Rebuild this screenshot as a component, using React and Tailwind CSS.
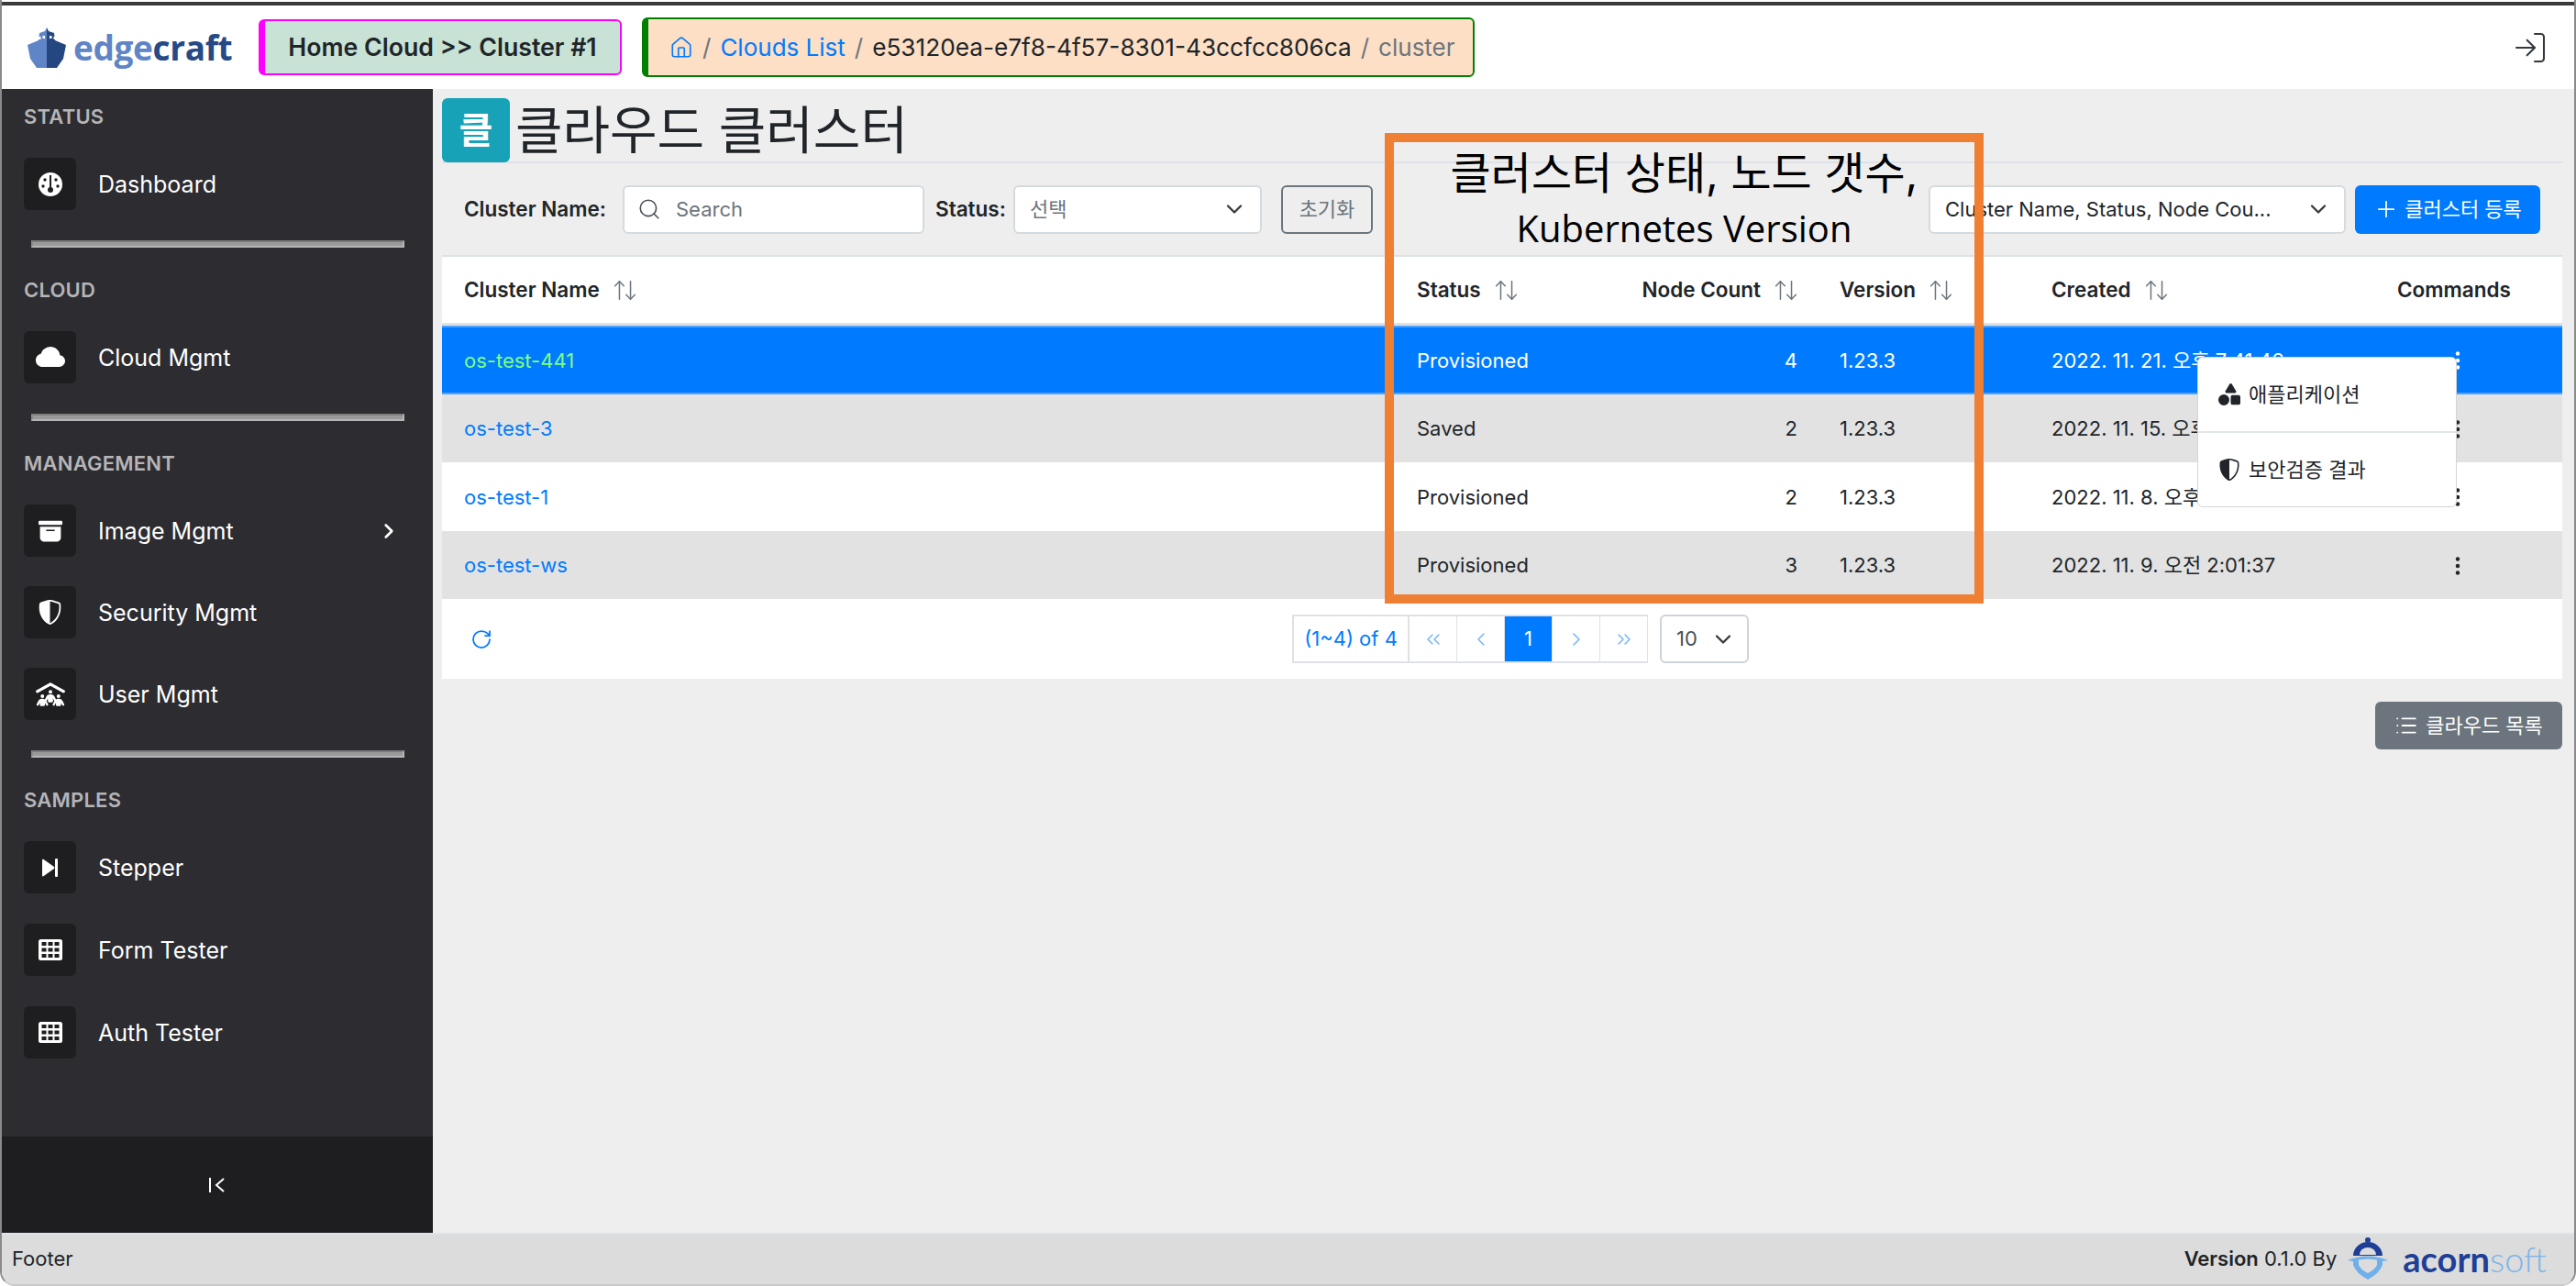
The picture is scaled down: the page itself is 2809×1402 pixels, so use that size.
import React from 'react';
import { ArrowUpDown, ChevronDown, ChevronLeft, ChevronRight, ChevronsLeft, ChevronsRight, LogIn, Plus, RotateCw, Search, List, House } from 'lucide-react';
import { BsArchiveFill, BsCloudFill, BsShieldShaded, BsThreeDotsVertical } from 'react-icons/bs';
import { FaPeopleRoof, FaShapes } from 'react-icons/fa6';

const GRID = 'grid grid-cols-[1039px_246px_215px_231px_377px_202px] items-center';

const clusters = [
  { name: 'os-test-441', status: 'Provisioned', nodes: 4, created: '2022. 11. 21. 오후 7:41:46', selected: true },
  { name: 'os-test-3', status: 'Saved', nodes: 2, created: '2022. 11. 15. 오후 4:12:09', striped: true },
  { name: 'os-test-1', status: 'Provisioned', nodes: 2, created: '2022. 11. 8. 오후 3:20:51' },
  { name: 'os-test-ws', status: 'Provisioned', nodes: 3, created: '2022. 11. 9. 오전 2:01:37', striped: true },
];

const GaugeIcon = () => (
  <svg viewBox="0 0 26 26" className="h-[26px] w-[26px]">
    <circle cx="13" cy="13" r="13" fill="#fff" />
    <circle cx="7" cy="8" r="1.7" fill="#1e1e20" />
    <circle cx="19" cy="8" r="1.7" fill="#1e1e20" />
    <circle cx="5" cy="15" r="1.7" fill="#1e1e20" />
    <circle cx="21" cy="15" r="1.7" fill="#1e1e20" />
    <path d="M13 3v14" stroke="#1e1e20" strokeWidth="2" />
    <circle cx="13" cy="19" r="3" fill="#1e1e20" />
  </svg>
);

const StepIcon = () => (
  <svg viewBox="0 0 17 20" className="h-5 w-[17px]" fill="#fff">
    <path d="M1 0.5q-1 0-1 1.500v16q0 1.500 1 1.500l12-8.500q1-1 0-2z" />
    <rect x="14" y="0" width="3" height="20" rx="1" />
  </svg>
);

const GridIcon = () => (
  <svg viewBox="0 0 26 23" className="h-[23px] w-[26px]">
    <rect width="26" height="23" rx="2.500" fill="#fff" />
    {[3, 9.5, 16].map((y) =>
      [3.5, 10.5, 17.5].map((x) => <rect key={`${x}-${y}`} x={x} y={y} width="5" height="4" fill="#1e1e20" />)
    )}
  </svg>
);

const CollapseIcon = () => (
  <svg viewBox="0 0 20 20" className="h-5 w-5" fill="none" stroke="#fff" strokeWidth="2">
    <path d="M2 2v16M17 3l-8 7 8 7" />
  </svg>
);

const ShipLogo = () => (
  <svg viewBox="0 0 42 44" className="h-[44px] w-[42px]">
    <path d="M21 0l2 4 6 2 1 8 12 5-3 15-7 10h-11z" fill="#24477f" />
    <path d="M21 0l-2 4-6 2-1 8-12 5 3 15 7 10h11z" fill="#5f85c7" />
    <rect x="11.5" y="10" width="3" height="3" fill="#fff" />
    <rect x="16.5" y="9" width="2.5" height="3" fill="#fff" />
    <rect x="24" y="9" width="2.5" height="3" fill="#fff" />
    <rect x="28.5" y="10" width="2.5" height="3" fill="#fff" />
  </svg>
);

const AcornLogo = () => (
  <svg viewBox="0 0 44 46" className="h-[46px] w-[44px]">
    <circle cx="22" cy="3" r="3" fill="#1f3f96" />
    <path d="M6 20a16 15 0 0 1 32 0z" fill="#1f3f96" />
    <path d="M13 19a9 8 0 0 1 18 0z" fill="#dcdcdc" />
    <path d="M0 25q22-9 44 0l-6 1q-16-5-32 0z" fill="#6fb0ea" />
    <path d="M6 24v6q3 9 16 16 13-7 16-16v-6l-6 1v5q-2 5-10 9-8-4-10-9v-5z" fill="#6fb0ea" />
  </svg>
);

const SortLabel = ({ children, className = '' }) => (
  <div className={`flex items-center gap-[13px] whitespace-nowrap pl-6 font-semibold ${className}`}>
    {children}
    <ArrowUpDown size={29} strokeWidth={1.25} className="shrink-0 text-[#6c757d]" />
  </div>
);

const SideItem = ({ icon, label, chevron }) => (
  <div className="flex h-[57px] items-center gap-6 pr-[11px] text-[25px] text-white">
    <span className="flex h-[57px] w-[57px] shrink-0 items-center justify-center rounded-md bg-[#1e1e20]">{icon}</span>
    <span className="flex-1 pt-[2px]">{label}</span>
    {chevron && <ChevronRight size={26} strokeWidth={2.5} />}
  </div>
);

const SideGroup = ({ title, gap, rule, children }) => (
  <div>
    <div className="mb-[30px] h-[30px] text-[22px] font-semibold leading-[30px] tracking-[0.01em] text-[#b5b5b8]">{title}</div>
    <div className={`flex flex-col ${gap}`}>{children}</div>
    {rule && (
      <div className="mb-[31px] ml-2 mr-[7px] mt-[33px] h-2 border-2 border-t-[#7d7d7d] border-l-[#8c8c8c] border-r-[#b5b5b5] border-b-[#b5b5b5] bg-[#9a9a9a]" />
    )}
  </div>
);

const Sidebar = () => (
  <aside className="flex w-[470px] shrink-0 flex-col bg-[#2c2c31]">
    <nav className="flex-1 pl-[24px] pr-[24px] pt-[15px]">
      <SideGroup title="STATUS" gap="gap-8" rule>
        <SideItem icon={<GaugeIcon />} label="Dashboard" />
      </SideGroup>
      <SideGroup title="CLOUD" gap="gap-8" rule>
        <SideItem icon={<BsCloudFill size={32} color="#fff" />} label="Cloud Mgmt" />
      </SideGroup>
      <SideGroup title="MANAGEMENT" gap="gap-8" rule>
        <SideItem icon={<BsArchiveFill size={26} color="#fff" />} label="Image Mgmt" chevron />
        <SideItem icon={<BsShieldShaded size={27} color="#fff" />} label="Security Mgmt" />
        <SideItem icon={<FaPeopleRoof size={32} color="#fff" />} label="User Mgmt" />
      </SideGroup>
      <SideGroup title="SAMPLES" gap="gap-[33px]">
        <SideItem icon={<StepIcon />} label="Stepper" />
        <SideItem icon={<GridIcon />} label="Form Tester" />
        <SideItem icon={<GridIcon />} label="Auth Tester" />
      </SideGroup>
    </nav>
    <div className="flex h-[105px] items-center justify-center bg-[#1e1e20]">
      <CollapseIcon />
    </div>
  </aside>
);

const Toolbar = () => (
  <div className="flex h-[100px] items-center text-[22px] text-[#212529]">
    <span className="ml-6 w-[173px] text-[22.5px] font-semibold">Cluster Name:</span>
    <div className="flex h-[53px] w-[329px] items-center gap-[16px] rounded-md border-2 border-[#d5dadf] bg-white pl-[14px]">
      <Search size={26} strokeWidth={1.5} className="text-[#495057]" />
      <span className="text-[#6c757d]">Search</span>
    </div>
    <span className="ml-3 w-[85px] text-[22.5px] font-semibold">Status:</span>
    <div className="flex h-[53px] w-[271px] items-center justify-between rounded-md border-2 border-[#d5dadf] bg-white pl-[16px] pr-[14px] text-[#6c757d]">
      선택
      <ChevronDown size={28} strokeWidth={2} className="text-[#343a40]" />
    </div>
    <button className="ml-[21px] h-[53px] w-[100px] rounded-md border-2 border-[#6c757d] text-[#6c757d]">초기화</button>
    <div className="ml-[606px] flex h-[53px] w-[455px] items-center justify-between rounded-md border-2 border-[#d5dadf] bg-white pl-[16px] pr-[14px]">
      Cluster Name, Status, Node Cou...
      <ChevronDown size={28} strokeWidth={2} className="text-[#343a40]" />
    </div>
    <button className="ml-[10px] flex h-[53px] w-[202px] items-center justify-center gap-[6px] rounded-md bg-[#007bff] text-white">
      <Plus size={28} strokeWidth={1.5} />
      클러스터 등록
    </button>
  </div>
);

const ClusterRow = ({ row }) => {
  let tone = 'bg-white text-[#212529]';
  if (row.striped) tone = 'bg-[#e2e2e2] text-[#212529]';
  if (row.selected) tone = 'bg-[#007bff] text-white border-y-2 border-[#4da3ff]';
  return (
    <div className={`${GRID} h-[74.5px] pt-[2px] ${tone}`}>
      <div className={`pl-6 ${row.selected ? 'text-[#7dff7d]' : 'text-[#007bff]'}`}>{row.name}</div>
      <div className="pl-6">{row.status}</div>
      <div className="pr-[22px] text-right">{row.nodes}</div>
      <div className="pl-6">1.23.3</div>
      <div className="pl-6">{row.created}</div>
      <div className="flex pl-[78px]">
        <BsThreeDotsVertical size={24} />
      </div>
    </div>
  );
};

const PageCell = ({ children, active }) => (
  <span
    className={`-ml-px flex h-[53px] w-[53px] items-center justify-center border-y-2 border-x border-[#dee2e6] ${
      active ? 'border-[#007bff] bg-[#007bff] text-white' : 'bg-white text-[#76b4fa]'
    }`}
  >
    {children}
  </span>
);

const Paginator = () => (
  <div className="relative flex h-[87px] items-center justify-center bg-white text-[22px]">
    <RotateCw size={24} strokeWidth={1.75} className="absolute left-[31px] top-[32px] text-[#007bff]" />
    <div className="ml-[40px] flex items-center">
      <span className="flex h-[53px] w-[128px] items-center justify-center border-2 border-[#dee2e6] text-[#007bff]">(1~4) of 4</span>
      <PageCell><ChevronsLeft size={24} strokeWidth={1.5} /></PageCell>
      <PageCell><ChevronLeft size={24} strokeWidth={1.5} /></PageCell>
      <PageCell active>1</PageCell>
      <PageCell><ChevronRight size={24} strokeWidth={1.5} /></PageCell>
      <PageCell><ChevronsRight size={24} strokeWidth={1.5} /></PageCell>
      <div className="ml-[13px] flex h-[53px] w-[97px] items-center justify-between rounded-md border-2 border-[#ced4da] pl-[16px] pr-[12px] text-[#495057]">
        10
        <ChevronDown size={28} strokeWidth={2} className="text-[#343a40]" />
      </div>
    </div>
  </div>
);

const RowMenu = () => (
  <div className="absolute left-[1924px] top-[292px] flex h-[164px] w-[283px] flex-col rounded-md border border-[#d5d5d5] bg-white text-[22px] text-[#212529]">
    <div className="flex h-[82px] items-center gap-[9px] border-b-2 border-[#e3e6e9] pl-[22px]">
      <FaShapes size={24} />
      애플리케이션
    </div>
    <div className="flex flex-1 items-center gap-[9px] pl-[22px]">
      <BsShieldShaded size={24} />
      보안검증 결과
    </div>
  </div>
);

const Callout = () => (
  <div className="absolute left-[1038px] top-[48px] flex h-[513px] w-[653px] flex-col items-center border-[10px] border-[#ee7f33] pt-[4px] text-black">
    <div className="text-[48px] leading-[60px]">클러스터 상태, 노드 갯수,</div>
    <div className="font-['Open_Sans',sans-serif] text-[40px] leading-[60px]">Kubernetes Version</div>
  </div>
);

export default function App() {
  return (
    <div className="flex h-screen flex-col overflow-hidden rounded-b-2xl border-x-2 border-b-2 border-x-[#8a8a8a] border-b-[#c8c8c8] bg-white pt-[2px] font-['Inter','Noto_Sans_CJK_KR',sans-serif]">
      <div className="h-1 shrink-0 bg-[#3a3a3a]" />
      <header className="flex h-[91px] shrink-0 items-center">
        <div className="ml-[28px] flex w-[252px] items-center gap-[8px]">
          <ShipLogo />
          <span className="font-['Open_Sans',sans-serif] text-[37px] font-bold leading-none tracking-[-0.01em] text-[#5f85c7]">
            edge<span className="text-[#254a85]">craft</span>
          </span>
        </div>
        <div className="flex h-[61px] w-[396px] items-center justify-center rounded-md border-2 border-l-[7px] border-[#ff00ff] bg-[#c8e2d5] text-[26.7px] font-semibold text-[#212529]">
          Home Cloud &gt;&gt; Cluster #1
        </div>
        <div className="ml-[22px] flex h-[65px] w-[908px] items-center gap-[10px] rounded-md border-2 border-l-[7px] border-[#008000] bg-[#fddfc5] pl-[23px] text-[26px]">
          <House size={26} strokeWidth={1.5} className="text-[#007bff]" />
          <span className="text-[#6c757d]">/</span>
          <span className="text-[#007bff]">Clouds List</span>
          <span className="text-[#6c757d]">/</span>
          <span className="text-[26.2px] text-[#212529]">e53120ea-e7f8-4f57-8301-43ccfcc806ca</span>
          <span className="text-[#6c757d]">/</span>
          <span className="text-[#6c757d]">cluster</span>
        </div>
        <LogIn size={40} strokeWidth={1.25} className="ml-auto mr-[28px] text-[#343a40]" />
      </header>
      <div className="flex min-h-0 flex-1">
        <Sidebar />
        <main className="relative flex-1 bg-[#eeeeee] pl-[10px] pr-[13px] pt-[11px]">
          <div className="flex h-[70px] items-center gap-[6px] border-b-2 border-[#dee2e6]">
            <span className="flex h-[70px] w-[74px] items-center justify-center rounded-md bg-[#17a2b8] text-[40px] font-bold text-white">클</span>
            <h1 className="text-[56px] leading-none text-[#212529]">클라우드 클러스터</h1>
          </div>
          <Toolbar />
          <div className="text-[22px]">
            <div className={`${GRID} h-[77px] border-b-[3px] border-t-2 border-[#dee2e6] bg-white text-[22.5px] text-[#212529]`}>
              <SortLabel>Cluster Name</SortLabel>
              <SortLabel>Status</SortLabel>
              <SortLabel className="justify-end pr-[20px]">Node Count</SortLabel>
              <SortLabel>Version</SortLabel>
              <SortLabel>Created</SortLabel>
              <div className="pl-6 font-semibold">Commands</div>
            </div>
            {clusters.map((row) => (
              <ClusterRow key={row.name} row={row} />
            ))}
            <Paginator />
          </div>
          <div className="mt-[25px] flex justify-end">
            <button className="flex h-[52px] w-[204px] items-center justify-center gap-2 rounded-md bg-[#6c757d] text-[22px] text-white">
              <List size={26} strokeWidth={1.75} />
              클라우드 목록
            </button>
          </div>
          <Callout />
          <RowMenu />
        </main>
      </div>
      <footer className="flex h-[56px] shrink-0 items-center justify-between border-t-2 border-[#dde3e8] bg-[#dcdcdc] pb-[2px] pl-[11px] pr-[30px] text-[22px] text-[#212529]">
        <span>Footer</span>
        <div className="flex items-center gap-3">
          <span><b className="font-semibold">Version</b> 0.1.0 By</span>
          <AcornLogo />
          <span className="ml-[4px] font-['Lato',sans-serif] text-[38px] font-bold leading-none text-[#1f3f96]">
            acorn<span className="font-light text-[#7db4e8]">soft</span>
          </span>
        </div>
      </footer>
    </div>
  );
}
